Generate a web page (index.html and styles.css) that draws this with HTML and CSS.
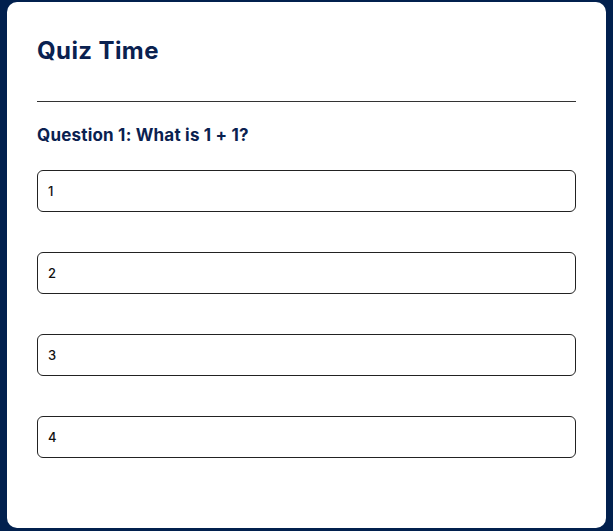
FILE: index.html
```html
<!DOCTYPE html>
<html>
<head>
<meta charset="utf-8">
<link rel="stylesheet" href="styles.css">
</head>
<body>
<div class="page">
  <div class="card">
    <h1 class="title">Quiz Time</h1>
    <hr class="rule">
    <h2 class="question">Question 1: What is 1 + 1?</h2>
    <div class="options">
      <div class="option">1</div>
      <div class="option">2</div>
      <div class="option">3</div>
      <div class="option">4</div>
    </div>
  </div>
</div>
</body>
</html>
```
FILE: styles.css
```css
html, body {
  margin: 0;
  padding: 0;
  background: #01204e;
}
.page {
  padding: 2px 7px 3px 7px;
  height: 531px;
  box-sizing: border-box;
}
.card {
  background: #ffffff;
  border-radius: 10px;
  height: 526px;
  box-sizing: border-box;
  padding: 30px;
  font-family: Inter, "Noto Sans", sans-serif;
}
.title {
  margin: 0;
  font-size: 24px;
  line-height: 38px;
  font-weight: 700;
  color: #0a2150;
  letter-spacing: 0.4px;
}
.rule {
  margin: 31px 0 0 0;
  border: 0;
  border-top: 1px solid #333333;
  height: 0;
}
.question {
  margin: 20px 0 0 0;
  font-size: 17px;
  line-height: 26px;
  font-weight: 700;
  color: #0a2150;
  letter-spacing: 0.2px;
}
.options {
  display: flex;
  flex-direction: column;
  gap: 40px;
  margin-top: 22px;
}
.option {
  height: 42px;
  box-sizing: border-box;
  border: 1px solid #222222;
  border-radius: 6px;
  padding: 0 10px;
  display: flex;
  align-items: center;
  font-size: 13px;
  font-weight: 500;
  color: #111111;
}
```
